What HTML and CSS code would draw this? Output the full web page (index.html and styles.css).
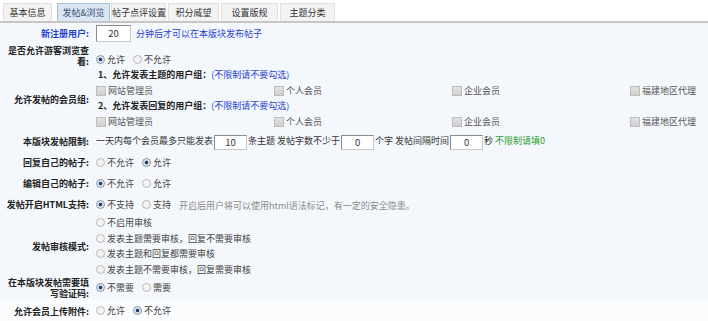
FILE: index.html
```html
<!DOCTYPE html>
<html lang="zh-CN">
<head>
<meta charset="UTF-8">
<title>版块设置 - 发帖&amp;浏览</title>
<link rel="stylesheet" href="styles.css">
</head>
<body>
<ul class="tabs">
  <li class="tab w49">基本信息</li>
  <li class="tab w53 on">发帖&amp;浏览</li>
  <li class="tab w55">帖子点评设置</li>
  <li class="tab w51">积分威望</li>
  <li class="tab w57">设置版规</li>
  <li class="tab w55">主题分类</li>
</ul>

<table class="form">
  <colgroup><col class="lab"><col></colgroup>
  <tr class="r20">
    <th class="blue">新注册用户:</th>
    <td><span class="inline"><input class="num first" type="text" value="20"><span class="blue">分钟后才可以在本版块发布帖子</span></span></td>
  </tr>
  <tr class="r23">
    <th>是否允许游客浏览查看:</th>
    <td class="low">
      <label class="opt"><i class="radio checked"></i>允许</label>
      <label class="opt"><i class="radio"></i>不允许</label>
    </td>
  </tr>
  <tr class="r63">
    <th>允许发帖的会员组:</th>
    <td class="groupcell">
      <div class="sub">1、允许发表主题的用户组：<span class="blue">(不限制请不要勾选)</span></div>
      <div class="groups">
        <label><i class="check"></i>网站管理员</label>
        <label><i class="check"></i>个人会员</label>
        <label><i class="check"></i>企业会员</label>
        <label><i class="check"></i>福建地区代理</label>
      </div>
      <div class="sub">2、允许发表回复的用户组：<span class="blue">(不限制请不要勾选)</span></div>
      <div class="groups">
        <label><i class="check"></i>网站管理员</label>
        <label><i class="check"></i>个人会员</label>
        <label><i class="check"></i>企业会员</label>
        <label><i class="check"></i>福建地区代理</label>
      </div>
    </td>
  </tr>
  <tr class="r21">
    <th>本版块发帖限制:</th>
    <td>一天内每个会员最多只能发表<input class="num" type="text" value="10">条主题 发帖字数不少于<input class="num" type="text" value="0">个字 发帖间隔时间<input class="num" type="text" value="0">秒 <span class="green">不限制请填0</span></td>
  </tr>
  <tr class="r21">
    <th>回复自己的帖子:</th>
    <td>
      <label class="opt"><i class="radio"></i>不允许</label>
      <label class="opt"><i class="radio checked"></i>允许</label>
    </td>
  </tr>
  <tr class="r21">
    <th>编辑自己的帖子:</th>
    <td>
      <label class="opt"><i class="radio checked"></i>不允许</label>
      <label class="opt"><i class="radio"></i>允许</label>
    </td>
  </tr>
  <tr class="r21">
    <th>发帖开启HTML支持:</th>
    <td>
      <label class="opt"><i class="radio checked"></i>不支持</label>
      <label class="opt"><i class="radio"></i>支持</label><span class="hint">开启后用户将可以使用html语法标记，有一定的安全隐患。</span>
    </td>
  </tr>
  <tr class="r61">
    <th>发帖审核模式:</th>
    <td class="stack">
      <label class="opt"><i class="radio"></i>不启用审核</label>
      <label class="opt"><i class="radio"></i>发表主题需要审核，回复不需要审核</label>
      <label class="opt"><i class="radio"></i>发表主题和回复都需要审核</label>
      <label class="opt"><i class="radio"></i>发表主题不需要审核，回复需要审核</label>
    </td>
  </tr>
  <tr class="r22">
    <th>在本版块发帖需要填写验证码:</th>
    <td>
      <label class="opt"><i class="radio checked"></i>不需要</label>
      <label class="opt"><i class="radio"></i>需要</label>
    </td>
  </tr>
  <tr class="r24 last">
    <th>允许会员上传附件:</th>
    <td>
      <label class="opt"><i class="radio"></i>允许</label>
      <label class="opt"><i class="radio checked"></i>不允许</label>
    </td>
  </tr>
</table>
</body>
</html>
```

FILE: styles.css
```css
body {margin:0;background:#fff;font-family:"Noto Sans CJK SC","Liberation Sans",sans-serif;font-size:9px;color:#333;}
.tabs {list-style:none;margin:0;padding:3px 0 0 3px;display:flex;gap:2px;border-bottom:2px solid #c6c6c6;height:18px;}
.tab {box-sizing:border-box;height:18px;line-height:17px;text-align:center;white-space:nowrap;background:#f3f3f3;border:1px solid #e0e0e0;border-bottom:none;color:#333;font-size:9px;}
.w49 {width:49px;}
.w51 {width:51px;}
.w53 {width:53px;margin-left:3px;margin-right:-1px;}
.w55 {width:55px;}
.w57 {width:57px;}
.tab.on {background:#d9e6f3;border-color:#aac0d8;color:#3a5276;}
.form {width:100%;table-layout:fixed;border-collapse:collapse;background:#f4f8fd;}
.form col.lab {width:93px;}
.form th {padding:0 4px 0 0;text-align:right;font-weight:bold;color:#222;line-height:11px;vertical-align:middle;}
.form td {padding:0 0 0 3px;line-height:15px;vertical-align:middle;white-space:nowrap;overflow:hidden;}
.r20 {height:20px;}
.r21 {height:21px;}
.r22 {height:22px;}
.r23 {height:23px;}
.r24 {height:24px;}
.r61 {height:61px;}
.r63 {height:63px;}
.form td.low {padding-top:9px;}
.last {background:#fbfcfe;}
.blue {color:#1f3fd6;}
.form th.blue {color:#1f3fd6;}
.green {color:#2c9a2c;}
.hint {color:#8a8a8a;margin-left:2px;}
.inline {display:flex;align-items:center;gap:5px;}
.form td.groupcell {vertical-align:top;}
.sub {font-weight:bold;color:#222;height:14px;line-height:14px;padding-left:2px;}
.sub .blue {font-weight:normal;}
.groups {display:grid;grid-template-columns:178px 178px 178px auto;height:17px;align-items:center;color:#555;}
.groups label {display:flex;align-items:center;gap:2px;}
.num {width:33px;height:15px;padding:0;margin:0 1px;border:1px solid #c8c8c8;border-top-color:#8c8c8c;border-left-color:#8c8c8c;text-align:center;font-family:inherit;font-size:9.5px;color:#333;background:#fff;vertical-align:middle;box-sizing:border-box;}
.num.first {width:35px;height:17px;margin:0;flex:none;}
.opt {display:inline-flex;align-items:center;gap:2px;margin:0 6px 0 0;color:#444;}
.stack .opt {display:flex;height:15.5px;}
.radio {display:inline-block;width:7px;height:7px;border-radius:50%;border:1px solid #b8b8b8;background:#f4f4f4;box-sizing:content-box;}
.radio.checked {border-color:#8a98a8;background:radial-gradient(circle,#24466e 0,#24466e 1.6px,#dfe6ee 2.2px);}
.check {display:inline-block;width:8px;height:8px;border:1px solid #bdbdbd;background:linear-gradient(#e2e2e2,#cfcfcf);}
```
